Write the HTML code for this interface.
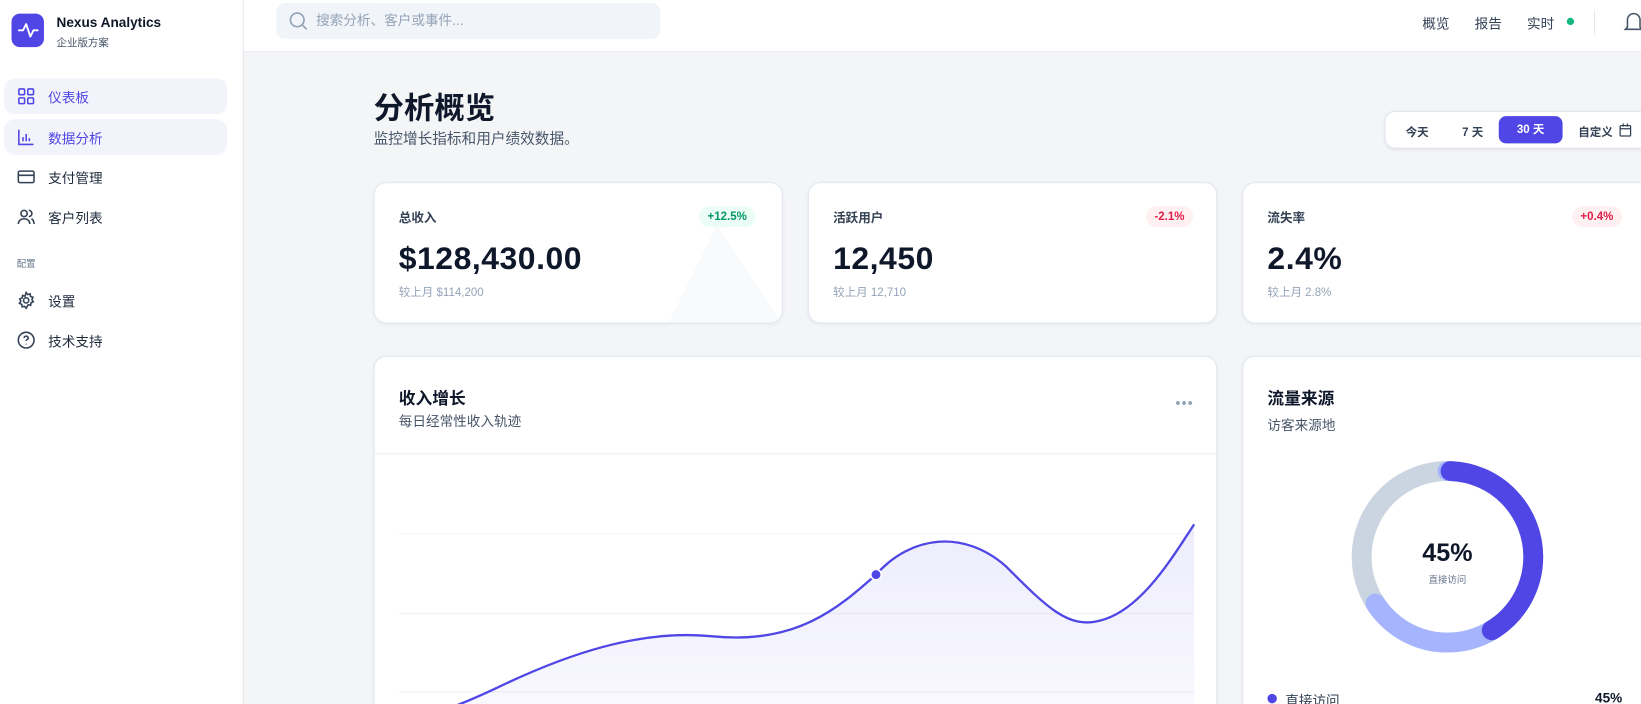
<!DOCTYPE html>
<html><head><meta charset="utf-8"><style>
*{box-sizing:border-box;margin:0;padding:0}
html,body{width:1641px;height:704px;overflow:hidden;background:#f4f5f7}
#w{position:absolute;left:0;top:0;width:1568px;height:673px;transform:scale(1.0466);transform-origin:0 0;font-family:"Liberation Sans","Noto Sans CJK SC",sans-serif;color:#0f172a;overflow:hidden}
.side{position:absolute;left:0;top:0;width:233px;height:673px;background:#fff;border-right:1px solid #e5e7eb}
.logo{position:absolute;left:11px;top:13px;width:31px;height:32px;border-radius:8px;background:#4f46e5}
.brand{position:absolute;left:54px;top:14px;font-size:13px;font-weight:bold}
.brand small{display:block;font-size:10px;font-weight:normal;color:#475569;margin-top:3px}
.nav{position:absolute;left:4px;width:213px;height:34px;border-radius:10px;display:flex;align-items:center;padding-left:12px;font-size:13px;color:#1e293b}
.nav svg{width:18px;height:18px;margin-right:12px}
.nav.act{background:#f3f4fb;color:#4f46e5}
.top{position:absolute;left:233px;top:0;width:1400px;height:50px;background:#fff;border-bottom:1px solid #e2e8f0}
.search{position:absolute;left:31px;top:3px;width:367px;height:34px;border-radius:8px;background:#f1f4f8;color:#94a3b8;font-size:13px;padding-left:38px;line-height:34px}
.card{position:absolute;background:#fff;border:1px solid #e2e8f0;border-radius:12px;box-shadow:0 1px 3px rgba(0,0,0,.06)}
.lbl{position:absolute;left:23px;top:24px;font-size:12px;color:#334155;font-weight:bold}
.big{position:absolute;left:23px;top:55px;font-size:30.5px;font-weight:bold;letter-spacing:.5px}
.sub{position:absolute;left:23px;top:96px;font-size:11px;color:#94a3b8}
.badge{position:absolute;top:22px;height:20px;padding:0 8px;border-radius:10px;font-size:11px;font-weight:bold;line-height:20px}
</style></head><body><div id="w">
<div class="side">
<div class="logo"><svg width="31" height="32" viewBox="0 0 31 32"><path d="M7 16h4l3-6 4 12 3-6h4" fill="none" stroke="#fff" stroke-width="1.8" stroke-linecap="round" stroke-linejoin="round"/></svg></div>
<div class="brand">Nexus Analytics<small>企业版方案</small></div>
<div class="nav act" style="top:75px"><svg viewBox="0 0 18 18" fill="none" stroke="#4f46e5" stroke-width="1.5"><rect x="2" y="2" width="5.5" height="5.5" rx="1"/><rect x="10.5" y="2" width="5.5" height="5.5" rx="1"/><rect x="2" y="10.5" width="5.5" height="5.5" rx="1"/><rect x="10.5" y="10.5" width="5.5" height="5.5" rx="1"/></svg>仪表板</div>
<div class="nav act" style="top:114px"><svg viewBox="0 0 18 18" fill="none" stroke="#4f46e5" stroke-width="1.5"><path d="M2 2v14h14M6 13V9M9 13V6M12 13v-3"/></svg>数据分析</div>
<div class="nav" style="top:152px"><svg viewBox="0 0 18 18" fill="none" stroke="#334155" stroke-width="1.5"><rect x="1.5" y="3.5" width="15" height="11" rx="1.5"/><path d="M1.5 7.5h15"/></svg>支付管理</div>
<div class="nav" style="top:190px"><svg viewBox="0 0 18 18" fill="none" stroke="#334155" stroke-width="1.5"><circle cx="7" cy="6" r="3"/><path d="M1.5 16c0-3 2.5-5 5.5-5s5.5 2 5.5 5M11.5 3a3 3 0 010 6M14 11c1.5.7 2.5 2.5 2.5 5"/></svg>客户列表</div>
<div style="position:absolute;left:16px;top:245px;font-size:9px;color:#64748b">配置</div>
<div class="nav" style="top:270px"><svg viewBox="0 0 18 18" fill="none" stroke="#334155" stroke-width="1.5"><circle cx="9" cy="9" r="2.5"/><path d="M9 1.5l1.5 2 2.3-.7.4 2.4 2.3.9-1 2.2 1.3 2-2.2 1-.3 2.4-2.4-.5L9 16.5l-1.5-1.8-2.4.5-.3-2.4-2.2-1 1.3-2-1-2.2 2.3-.9.4-2.4 2.3.7z"/></svg>设置</div>
<div class="nav" style="top:308px"><svg viewBox="0 0 18 18" fill="none" stroke="#334155" stroke-width="1.5"><circle cx="9" cy="9" r="7.5"/><path d="M7 7a2 2 0 114 .3c-.5 1-2 1.2-2 2.5M9 12.5v.5"/></svg>技术支持</div>
</div>
<div class="top">
<div class="search"><svg style="position:absolute;left:12px;top:8px" width="18" height="18" viewBox="0 0 18 18" fill="none" stroke="#94a3b8" stroke-width="1.6"><circle cx="8" cy="8" r="6.5"/><path d="M13 13l4 4"/></svg>搜索分析、客户或事件...</div>
<div style="position:absolute;left:1126px;top:12px;font-size:13px;color:#334155">概览</div>
<div style="position:absolute;left:1176px;top:12px;font-size:13px;color:#334155">报告</div>
<div style="position:absolute;left:1226px;top:12px;font-size:13px;color:#334155">实时</div>
<div style="position:absolute;left:1264px;top:17px;width:7px;height:7px;border-radius:50%;background:#10b981"></div>
<div style="position:absolute;left:1290px;top:9px;width:1px;height:24px;background:#e2e8f0"></div>
<svg style="position:absolute;left:1318px;top:10px" width="20" height="22" viewBox="0 0 20 22" fill="none" stroke="#475569" stroke-width="1.5"><path d="M4 16V9a6 6 0 0112 0v7l2 2H2z"/></svg>
</div>
<div style="position:absolute;left:357px;top:80px;font-size:29px;font-weight:bold">分析概览</div>
<div style="position:absolute;left:357px;top:122px;font-size:14px;color:#475569">监控增长指标和用户绩效数据。</div>
<div style="position:absolute;left:1323px;top:106px;width:330px;height:36px;background:#fff;border:1px solid #e2e8f0;border-radius:10px;box-shadow:0 1px 3px rgba(0,0,0,.08);font-size:11px;font-weight:bold;color:#334155">
<span style="position:absolute;left:19px;top:11px">今天</span>
<span style="position:absolute;left:73px;top:11px">7 天</span>
<span style="position:absolute;left:108px;top:4px;width:61px;height:26px;background:#4f46e5;border-radius:7px;color:#fff;text-align:center;line-height:26px">30 天</span>
<span style="position:absolute;left:184px;top:11px">自定义</span>
<svg style="position:absolute;left:223px;top:11px" width="12" height="13" viewBox="0 0 12 13" fill="none" stroke="#334155" stroke-width="1.2"><rect x="1" y="2" width="10" height="10" rx="1"/><path d="M1 5h10M4 0v3M8 0v3"/></svg>
</div>
<div class="card" style="left:357px;top:174px;width:391px;height:135px;overflow:hidden">
<svg style="position:absolute;left:280px;top:40px" width="110" height="95"><path d="M0 95L47 0 110 95z" fill="#f8fafc"/></svg>
<div class="lbl">总收入</div><div class="badge" style="left:310px;background:#ecfdf5;color:#059669">+12.5%</div>
<div class="big">$128,430.00</div><div class="sub">较上月 $114,200</div></div>
<div class="card" style="left:772px;top:174px;width:391px;height:135px">
<div class="lbl">活跃用户</div><div class="badge" style="left:322px;background:#fff1f2;color:#e11d48">-2.1%</div>
<div class="big">12,450</div><div class="sub">较上月 12,710</div></div>
<div class="card" style="left:1187px;top:174px;width:480px;height:135px">
<div class="lbl">流失率</div><div class="badge" style="left:314px;background:#fff1f2;color:#e11d48">+0.4%</div>
<div class="big">2.4%</div><div class="sub">较上月 2.8%</div></div>
<div class="card" style="left:357px;top:340px;width:806px;height:400px;overflow:hidden">
<div style="position:absolute;left:23px;top:26px;font-size:16px;font-weight:bold">收入增长</div>
<div style="position:absolute;left:23px;top:51px;font-size:13px;color:#475569">每日经常性收入轨迹</div>
<div style="position:absolute;left:765px;top:36px;font-size:14px;color:#94a3b8;letter-spacing:1px">•••</div>
<div style="position:absolute;left:0;top:92px;width:806px;height:1px;background:#eef0f3"></div>
<svg style="position:absolute;left:0;top:93px" width="806" height="320" viewBox="357 433 806 320">
<defs><linearGradient id="g" x1="0" y1="0" x2="0" y2="1"><stop offset="0" stop-color="#4f46e5" stop-opacity=".1"/><stop offset="1" stop-color="#4f46e5" stop-opacity=".02"/></linearGradient></defs>
<path d="M380 509H1140M380 585H1140M380 660H1140" stroke="#f1f3f6"/>
<path d="M380 690 C410 684 440 672 470 658 C540 624 610 600 680 607 C760 615 800 580 836 548 C870 510 920 505 960 540 C1000 580 1020 600 1050 592 C1090 582 1120 530 1140 500 V720 H380Z" fill="url(#g)"/>
<path d="M380 690 C410 684 440 672 470 658 C540 624 610 600 680 607 C760 615 800 580 836 548 C870 510 920 505 960 540 C1000 580 1020 600 1050 592 C1090 582 1120 530 1140 500" fill="none" stroke="#4f46e5" stroke-width="2.2"/>
<circle cx="836" cy="548" r="5" fill="#4f46e5" stroke="#fff" stroke-width="1.5"/>
</svg></div>
<div class="card" style="left:1187px;top:340px;width:480px;height:400px">
<div style="position:absolute;left:23px;top:26px;font-size:16px;font-weight:bold">流量来源</div>
<div style="position:absolute;left:23px;top:55px;font-size:13px;color:#475569">访客来源地</div>
<svg style="position:absolute;left:95px;top:91px" width="200" height="200" viewBox="0 0 200 200">
<g transform="rotate(-90 100 100)" fill="none" stroke-width="19" stroke-linecap="round">
<circle cx="100" cy="100" r="82" stroke="#cbd5e1"/>
<circle cx="100" cy="100" r="82" stroke="#a5b4fc" stroke-dasharray="0 202 137 500"/>
<circle cx="100" cy="100" r="82" stroke="#4f46e5" stroke-dasharray="210 500" stroke-dashoffset="-3"/>
</g>
<text x="100" y="104" text-anchor="middle" font-size="24" font-weight="bold" fill="#0f172a" font-family="Liberation Sans">45%</text>
<text x="100" y="125" text-anchor="middle" font-size="9" fill="#64748b" font-family="Liberation Sans,Noto Sans CJK SC">直接访问</text>
</svg>
<div style="position:absolute;left:23px;top:322px;width:9px;height:9px;border-radius:50%;background:#4f46e5"></div>
<div style="position:absolute;left:40px;top:318px;font-size:13px;color:#334155">直接访问</div>
<div style="position:absolute;left:336px;top:318px;font-size:13px;font-weight:bold">45%</div>
</div>
</div></body></html>
